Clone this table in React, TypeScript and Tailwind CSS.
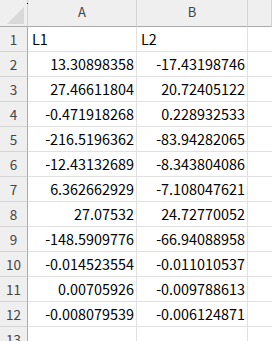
import React from 'react';

const rows: [string, string][] = [
  ['L1', 'L2'],
  ['13.30898358', '-17.43198746'],
  ['27.46611804', '20.72405122'],
  ['-0.471918268', '0.228932533'],
  ['-216.5196362', '-83.94282065'],
  ['-12.43132689', '-8.343804086'],
  ['6.362662929', '-7.108047621'],
  ['27.07532', '24.72770052'],
  ['-148.5909776', '-66.94088958'],
  ['-0.014523554', '-0.011010537'],
  ['0.00705926', '-0.009788613'],
  ['-0.008079539', '-0.006124871'],
];

const font = { fontFamily: '"Noto Sans CJK JP", "Noto Sans", sans-serif' };

function Cell({ value, first }: { value: string; first: boolean }) {
  // header text row is left aligned, numbers go right
  return (
    <div
      className={`flex h-full items-center border-r border-b border-[#e1e1e1] text-[14.4px] leading-none text-black ${
        first ? 'justify-start pl-[4px]' : 'justify-end pr-[2px]'
      }`}
    >
      {value}
    </div>
  );
}

export default function App() {
  return (
    <div className="relative h-[341px] w-[272px] overflow-hidden bg-white" style={font}>
      <div className="grid grid-cols-[28px_109px_111px_1fr] grid-rows-[27px_repeat(13,25px)]">
        {/* column headers */}
        <div className="relative border-r border-b border-r-[#d4d4d4] border-b-[#ababab] bg-[#efefef]">
          <svg className="absolute right-[3px] bottom-[2px]" width="17" height="17" viewBox="0 0 17 17">
            <polygon points="17,0 17,17 0,17" fill="#d9d9d9" />
          </svg>
        </div>
        {['A', 'B', ''].map((h, i) => (
          <div
            key={i}
            className="flex items-center justify-center border-r border-b border-r-[#d4d4d4] border-b-[#ababab] bg-[#efefef] pb-[2px] text-[13px] text-[#444]"
          >
            {h}
          </div>
        ))}

        {Array.from({ length: 13 }).map((_, r) => (
          <React.Fragment key={r}>
            <div className="flex items-center justify-center border-r border-b border-r-[#ababab] border-b-[#d4d4d4] bg-[#efefef] text-[13.5px] text-[#444]">
              {r + 1}
            </div>
            <Cell value={rows[r]?.[0] ?? ''} first={r === 0} />
            <Cell value={rows[r]?.[1] ?? ''} first={r === 0} />
            <div className="border-b border-[#e1e1e1]" />
          </React.Fragment>
        ))}
      </div>
      <div className="absolute top-[3px] left-[27px] h-[1px] w-[1px] bg-black" />
    </div>
  );
}
